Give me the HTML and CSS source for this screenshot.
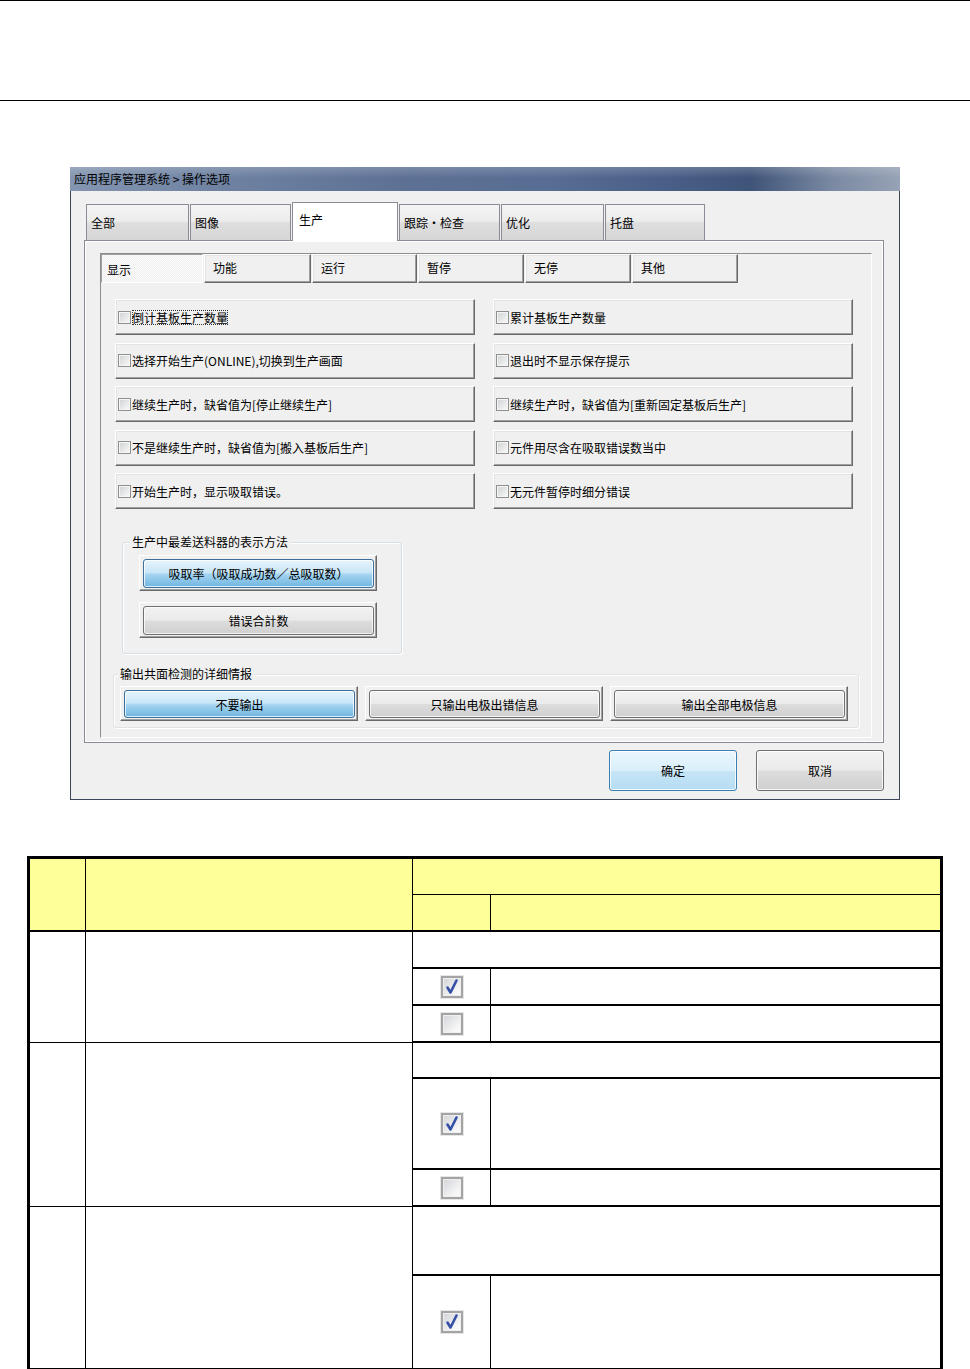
FILE: index.html
```html
<!DOCTYPE html>
<html lang="zh-CN">
<head>
<meta charset="utf-8">
<title>操作选项</title>
<link rel="stylesheet" href="styles.css">
</head>
<body>
<div class="doc-head"></div>

<div class="dialog">
  <div class="titlebar">应用程序管理系统 &gt; 操作选项</div>
  <div class="dlg-body">
    <div class="tabs">
      <div class="tab t1">全部</div>
      <div class="tab t2">图像</div>
      <div class="tab t3 active">生产</div>
      <div class="tab t2">跟踪・检查</div>
      <div class="tab t1">优化</div>
      <div class="tab t6">托盘</div>
    </div>
    <div class="tabpanel">
      <div class="subbox">
        <div class="subtabs">
          <div class="subtab s1 active">显示</div>
          <div class="subtab s2">功能</div>
          <div class="subtab s3">运行</div>
          <div class="subtab s4">暂停</div>
          <div class="subtab s4">无停</div>
          <div class="subtab s4">其他</div>
        </div>

        <div class="opts">
          <div class="opt"><span class="cb"></span><span class="lbl focus">倒计基板生产数量</span></div>
          <div class="opt"><span class="cb"></span><span class="lbl">累计基板生产数量</span></div>
          <div class="opt"><span class="cb"></span><span class="lbl">选择开始生产(ONLINE),切换到生产画面</span></div>
          <div class="opt"><span class="cb"></span><span class="lbl">退出时不显示保存提示</span></div>
          <div class="opt"><span class="cb"></span><span class="lbl">继续生产时，缺省值为[停止继续生产]</span></div>
          <div class="opt"><span class="cb"></span><span class="lbl">继续生产时，缺省值为[重新固定基板后生产]</span></div>
          <div class="opt"><span class="cb"></span><span class="lbl">不是继续生产时，缺省值为[搬入基板后生产]</span></div>
          <div class="opt"><span class="cb"></span><span class="lbl">元件用尽含在吸取错误数当中</span></div>
          <div class="opt"><span class="cb"></span><span class="lbl">开始生产时，显示吸取错误。</span></div>
          <div class="opt"><span class="cb"></span><span class="lbl">无元件暂停时细分错误</span></div>
        </div>

        <div class="grp grp1">
          <div class="legend">生产中最差送料器的表示方法</div>
          <div class="frame f-first"><div class="face blue">吸取率（吸取成功数／总吸取数）</div></div>
          <div class="frame f-second"><div class="face">错误合計数</div></div>
        </div>

        <div class="grp grp2">
          <div class="legend">输出共面检测的详细情报</div>
          <div class="row3">
            <div class="frame"><div class="face blue">不要输出</div></div>
            <div class="frame"><div class="face">只输出电极出错信息</div></div>
            <div class="frame"><div class="face">输出全部电极信息</div></div>
          </div>
        </div>
      </div>
    </div>
    <div class="footer">
      <div class="btn default">确定</div>
      <div class="btn">取消</div>
    </div>
  </div>
</div>

<table class="spec">
  <colgroup>
    <col class="col1"><col class="col2"><col class="col3"><col class="col4">
  </colgroup>
  <tr class="h1">
    <td class="y" rowspan="2"></td>
    <td class="y" rowspan="2"></td>
    <td class="y nr thin" colspan="2"></td>
  </tr>
  <tr class="h2">
    <td class="y"></td>
    <td class="y nr"></td>
  </tr>

  <tr class="r37">
    <td rowspan="3" class="thin"></td>
    <td rowspan="3" class="thin"></td>
    <td colspan="2" class="nr"></td>
  </tr>
  <tr class="r37">
    <td class="ck"><span class="tick on"><svg viewBox="0 0 22 22" width="22" height="22"><path d="M6.5 11.5 L9.5 16.5 L15.5 4.5" fill="none" stroke="#3350a6" stroke-width="2.6" stroke-linecap="round" stroke-linejoin="round"/></svg></span></td>
    <td class="nr"></td>
  </tr>
  <tr class="r37">
    <td class="ck"><span class="tick"></span></td>
    <td class="nr"></td>
  </tr>

  <tr class="r36">
    <td rowspan="3" class="thin"></td>
    <td rowspan="3" class="thin"></td>
    <td colspan="2" class="nr"></td>
  </tr>
  <tr class="r91">
    <td class="ck"><span class="tick on"><svg viewBox="0 0 22 22" width="22" height="22"><path d="M6.5 11.5 L9.5 16.5 L15.5 4.5" fill="none" stroke="#3350a6" stroke-width="2.6" stroke-linecap="round" stroke-linejoin="round"/></svg></span></td>
    <td class="nr"></td>
  </tr>
  <tr class="r37">
    <td class="ck"><span class="tick"></span></td>
    <td class="nr"></td>
  </tr>

  <tr class="r69">
    <td rowspan="2" class="nb"></td>
    <td rowspan="2" class="nb"></td>
    <td colspan="2" class="nr"></td>
  </tr>
  <tr class="r92">
    <td class="ck nb"><span class="tick on"><svg viewBox="0 0 22 22" width="22" height="22"><path d="M6.5 11.5 L9.5 16.5 L15.5 4.5" fill="none" stroke="#3350a6" stroke-width="2.6" stroke-linecap="round" stroke-linejoin="round"/></svg></span></td>
    <td class="nr nb"></td>
  </tr>
</table>
</body>
</html>
```

FILE: styles.css
```css
body {
  margin: 0;
  background: #ffffff;
  font-family: "Noto Sans CJK SC", "Liberation Sans", sans-serif;
  font-size: 12px;
  color: #000;
}

.doc-head {
  height: 99px;
  border-top: 1px solid #000;
  border-bottom: 1px solid #000;
}

/* ---------- dialog ---------- */
.dialog {
  margin: 66px 0 0 70px;
  width: 830px;
}

.titlebar {
  height: 24px;
  line-height: 24px;
  padding-left: 4px;
  background:
    linear-gradient(rgba(255,255,255,0.18), rgba(255,255,255,0) 45%),
    linear-gradient(90deg, #8395b0 0%, #6f82a2 18%, #5d7195 40%, #586d93 58%, #4a5f87 72%, #3f5479 82%, #7b8aa3 92%, #96a2b5 100%);
  color: #000;
}

.dlg-body {
  border: 1px solid #3d4658;
  border-top: none;
  background: #f0f0f0;
  padding: 11px 15px 8px 13px;
}

.tabs {
  display: flex;
  align-items: flex-end;
  gap: 1px;
  height: 38px;
  padding-left: 2px;
}

.tab {
  box-sizing: border-box;
  height: 36px;
  border: 1px solid #898c95;
  border-bottom: none;
  background: linear-gradient(#f4f4f4, #ececec 45%, #dedede 52%, #d6d6d6);
  padding: 10px 0 0 4px;
  line-height: 16px;
  white-space: nowrap;
}
.t1 { width: 103px; }
.t2 { width: 101px; }
.t3 { width: 106px; }
.t6 { width: 100px; }

.tab.active {
  height: 39px;
  margin-bottom: -1px;
  background: #ffffff;
  padding: 9px 0 0 6px;
  position: relative;
  z-index: 1;
}

.tabpanel {
  box-sizing: border-box;
  height: 503px;
  width: 800px;
  border: 1px solid #898c95;
  background: #f0f0f0;
  box-shadow: inset 1px 1px 0 #ffffff, inset -1px -1px 0 #ffffff;
  padding: 12px 11px 4px 15px;
}

.subbox {
  box-sizing: border-box;
  height: 485px;
  border-top: 1px solid #8d8d8d;
  border-left: 1px solid #8d8d8d;
  border-right: 1px solid #ffffff;
  border-bottom: 1px solid #ffffff;
}

.subtabs {
  display: flex;
  gap: 1px;
  height: 29px;
}

.subtab {
  box-sizing: border-box;
  height: 29px;
  border: 1px solid;
  border-color: #ffffff #696969 #696969 #ffffff;
  box-shadow: inset -1px -1px 0 #a0a0a0, inset 1px 1px 0 #e3e3e3;
  padding: 5px 0 0 8px;
  line-height: 16px;
}
.s1 { width: 102px; }
.s2 { width: 107px; }
.s3 { width: 105px; }
.s4 { width: 106px; }

.subtab.active {
  border-color: #a0a0a0 #ffffff #ffffff #a0a0a0;
  box-shadow: none;
  background: repeating-conic-gradient(#ffffff 0 25%, #ececec 0 50%) 0 0 / 2px 2px;
  padding: 7px 0 0 5px;
}

/* ---------- option rows ---------- */
.opts {
  display: grid;
  grid-template-columns: 360px 360px;
  grid-auto-rows: 36px;
  column-gap: 18px;
  row-gap: 7.5px;
  margin: 16px 0 0 14px;
}

.opt {
  box-sizing: border-box;
  border: 1px solid;
  border-color: #ffffff #696969 #696969 #ffffff;
  box-shadow: inset -1px -1px 0 #a0a0a0, inset 1px 1px 0 #e3e3e3;
  display: flex;
  align-items: center;
  padding-left: 2px;
  white-space: nowrap;
}

.cb {
  box-sizing: border-box;
  width: 13px;
  height: 13px;
  border: 1px solid #8e8f8f;
  background: linear-gradient(135deg, #cfd1d3, #f4f4f4 85%);
  box-shadow: inset 0 0 0 1px #f6f6f6;
  flex: none;
}

.lbl {
  margin-left: 1px;
  line-height: 15px;
}
.lbl.focus {
  outline: 1px dotted #333;
  outline-offset: -1px;
}

/* ---------- groups ---------- */
.grp {
  box-sizing: border-box;
  border: 1px solid #d5dfe5;
  border-radius: 3px;
  box-shadow: inset 1px 1px 0 #ffffff, 1px 1px 0 #ffffff;
}

.legend {
  display: block;
  width: max-content;
  background: #f0f0f0;
  line-height: 16px;
  padding: 0 2px;
  white-space: nowrap;
}

.grp1 {
  width: 280px;
  height: 112px;
  margin: 33px 0 0 21px;
}
.grp1 .legend {
  margin: -9px 0 0 7px;
}
.grp1 .frame {
  margin-left: 16px;
}
.f-first { margin-top: 5px; }
.f-second { margin-top: 11px; }

.grp2 {
  width: 746px;
  height: 54px;
  margin: 20px 0 0 12px;
  border-color: #e2e2e2;
}
.grp2 .legend {
  margin: -9px 0 0 4px;
}
.row3 {
  display: grid;
  grid-template-columns: 238px 238px 238px;
  column-gap: 7px;
  margin: 4px 0 0 6px;
}
.row3 .frame { height: 35px; }

.frame {
  box-sizing: border-box;
  width: 238px;
  height: 36px;
  border: 1px solid;
  border-color: #ffffff #696969 #696969 #ffffff;
  box-shadow: inset -1px -1px 0 #a0a0a0;
  padding: 3px 2px 2px 3px;
}

.face {
  box-sizing: border-box;
  height: 100%;
  border: 1px solid #707070;
  border-radius: 3px;
  background: linear-gradient(#f2f2f2, #ebebeb 48%, #dddddd 52%, #cfcfcf);
  box-shadow: inset 0 0 0 1px rgba(255,255,255,0.75);
  display: flex;
  align-items: center;
  justify-content: center;
  white-space: nowrap;
}
.face.blue {
  border-color: #3c6f9c;
  background: linear-gradient(#e6f4fc, #c9e6f7 46%, #a4d3f0 54%, #6fb6e1);
}

/* ---------- footer ---------- */
.footer {
  display: flex;
  justify-content: flex-end;
  gap: 19px;
  width: 800px;
  margin-top: 7px;
}

.btn {
  box-sizing: border-box;
  width: 128px;
  height: 41px;
  border: 1px solid #707070;
  border-radius: 3px;
  background: linear-gradient(#f2f2f2, #ebebeb 48%, #dddddd 52%, #cfcfcf);
  box-shadow: inset 0 0 0 1px rgba(255,255,255,0.8);
  display: flex;
  align-items: center;
  justify-content: center;
}
.btn.default {
  border-color: #3c7fb1;
  background: linear-gradient(#eaf6fd, #d9effb 50%, #c6e5f6 52%, #b5dcf2);
}

/* ---------- spec table ---------- */
.spec {
  margin: 56px 0 0 27px;
  width: 916px;
  table-layout: fixed;
  border-collapse: separate;
  border-spacing: 0;
  border: 3px solid #000;
}
.col1 { width: 56px; }
.col2 { width: 327px; }
.col3 { width: 78px; }
.col4 { width: 449px; }

.spec td {
  padding: 0;
  border-right: 1px solid #000;
  border-bottom: 2px solid #000;
  background: #ffffff;
}
.spec td.y { background: #ffff99; }
.spec td.nr { border-right: none; }
.spec td.nb { border-bottom: none; }
.spec td.thin { border-bottom-width: 1px; }

.spec tr.h1 { height: 36px; }
.spec tr.h2 { height: 37px; }
.spec tr.r36 { height: 36px; }
.spec tr.r37 { height: 37px; }
.spec tr.r69 { height: 69px; }
.spec tr.r91 { height: 91px; }
.spec tr.r92 { height: 92px; }

.spec td.ck { text-align: center; vertical-align: middle; }

.tick {
  display: inline-block;
  vertical-align: middle;
  box-sizing: border-box;
  width: 22px;
  height: 22px;
  border: 2px solid #a4a4a4;
  background: linear-gradient(135deg, #d2d4d8, #f8f8f8 80%);
  box-shadow: 0 0 0 1px #e6e6e6, inset 0 0 0 1px #eeeeee;
  position: relative;
}
.tick svg {
  display: block;
  margin: -2px;
}
```
